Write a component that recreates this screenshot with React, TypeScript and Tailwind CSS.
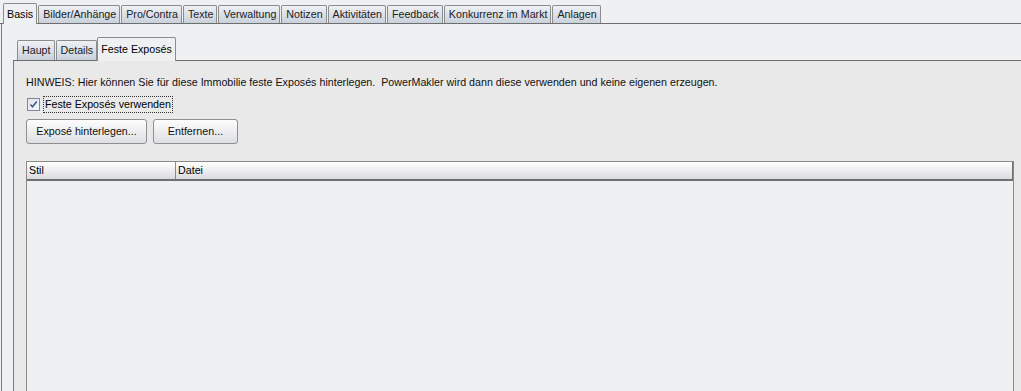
import React from 'react';

const outerTabs = ['Basis', 'Bilder/Anhänge', 'Pro/Contra', 'Texte', 'Verwaltung', 'Notizen', 'Aktivitäten', 'Feedback', 'Konkurrenz im Markt', 'Anlagen'];
const innerTabs = ['Haupt', 'Details', 'Feste Exposés'];

function Tab({ label, active, tall }: { label: string, active: boolean, tall?: boolean }) {
  if (active) {
    return (
      <div className={`relative z-10 -mb-px flex ${tall ? 'h-[24px]' : 'h-[21px]'} items-center rounded-t-[2px] border border-b-0 border-[#8c8c8c] bg-[#eef0f2] px-[3px] text-[#000]`}>
        {label}
      </div>
    );
  }
  return (
    <div className={`ml-[1px] flex ${tall ? 'h-[20px]' : 'h-[18px]'} items-center rounded-t-[2px] border border-b-0 border-[#8c8c8c] bg-gradient-to-b from-[#eef1f5] to-[#c9d1dc] pl-[4px] pr-[3px] text-[#222]`}>
      {label}
    </div>
  );
}

function TabRow({ tabs, active, tall }: { tabs: string[], active: number, tall?: boolean }) {
  return (
    <div className="flex items-end border-b border-[#6e6e6e] pl-[3px]">
      {tabs.map((t, i) => (
        <Tab key={t} label={t} active={i === active} tall={tall} />
      ))}
    </div>
  );
}

function Button({ label, width }: { label: string, width: string }) {
  return (
    <div className={`flex h-[25px] ${width} items-center justify-center rounded-[3px] border border-[#8f8f8f] bg-gradient-to-b from-[#fdfdfd] to-[#dedfe3] text-[#111]`}>
      {label}
    </div>
  );
}

export default function App() {
  return (
    <div className="h-[391px] w-[1021px] overflow-hidden bg-[#eef0f2] pt-[3px] text-[10.7px] leading-none text-black" style={{ fontFamily: '"Liberation Sans", Arial, sans-serif' }}>
      <TabRow tabs={outerTabs} active={0} />

      {/* outer panel */}
      <div className="ml-px h-full border-l border-[#7a7a7a] bg-[#eef0f2] pl-[11px] pt-[13px]">
        <TabRow tabs={innerTabs} active={2} tall />

        {/* inner panel */}
        <div className="h-full border-l border-[#7a7a7a] bg-[#e9e9e9] pl-[12px] pr-[7px] pt-[16px]">
          <div className="h-[12px] text-[#111]">
            HINWEIS: Hier können Sie für diese Immobilie feste Exposés hinterlegen.&nbsp; PowerMakler wird dann diese verwenden und keine eigenen erzeugen.
          </div>

          <div className="mt-[7px] flex items-center">
            <div className="ml-[1px] flex h-[13px] w-[13px] items-center justify-center border border-[#7a8a9c] bg-gradient-to-br from-[#dfe4ec] to-[#f6f7f9]">
              <svg width="9" height="9" viewBox="0 0 9 9">
                <path d="M1.5 4.5 L3.5 6.8 L7.8 1.5" fill="none" stroke="#3f5c8c" strokeWidth="1.6" />
              </svg>
            </div>
            <div className="ml-[3px] border border-dotted border-[#333] px-[1px] py-[2px]">Feste Exposés verwenden</div>
          </div>

          <div className="mt-[6px] flex gap-[6px]">
            <Button label="Exposé hinterlegen..." width="w-[121px]" />
            <Button label="Entfernen..." width="w-[85px]" />
          </div>

          {/* table */}
          <div className="mt-[17px] h-full border border-[#8a8a8a] bg-[#eff0f2]">
            <div className="flex h-[19px] border-b-2 border-[#707070] bg-gradient-to-b from-[#ffffff] to-[#dadbe0]">
              <div className="flex w-[149px] items-center border-r border-[#8a8a8a] pl-[2px]">Stil</div>
              <div className="flex flex-1 items-center border-r border-[#707070] pl-[2px]">Datei</div>
            </div>
          </div>
        </div>
      </div>
    </div>
  );
}
